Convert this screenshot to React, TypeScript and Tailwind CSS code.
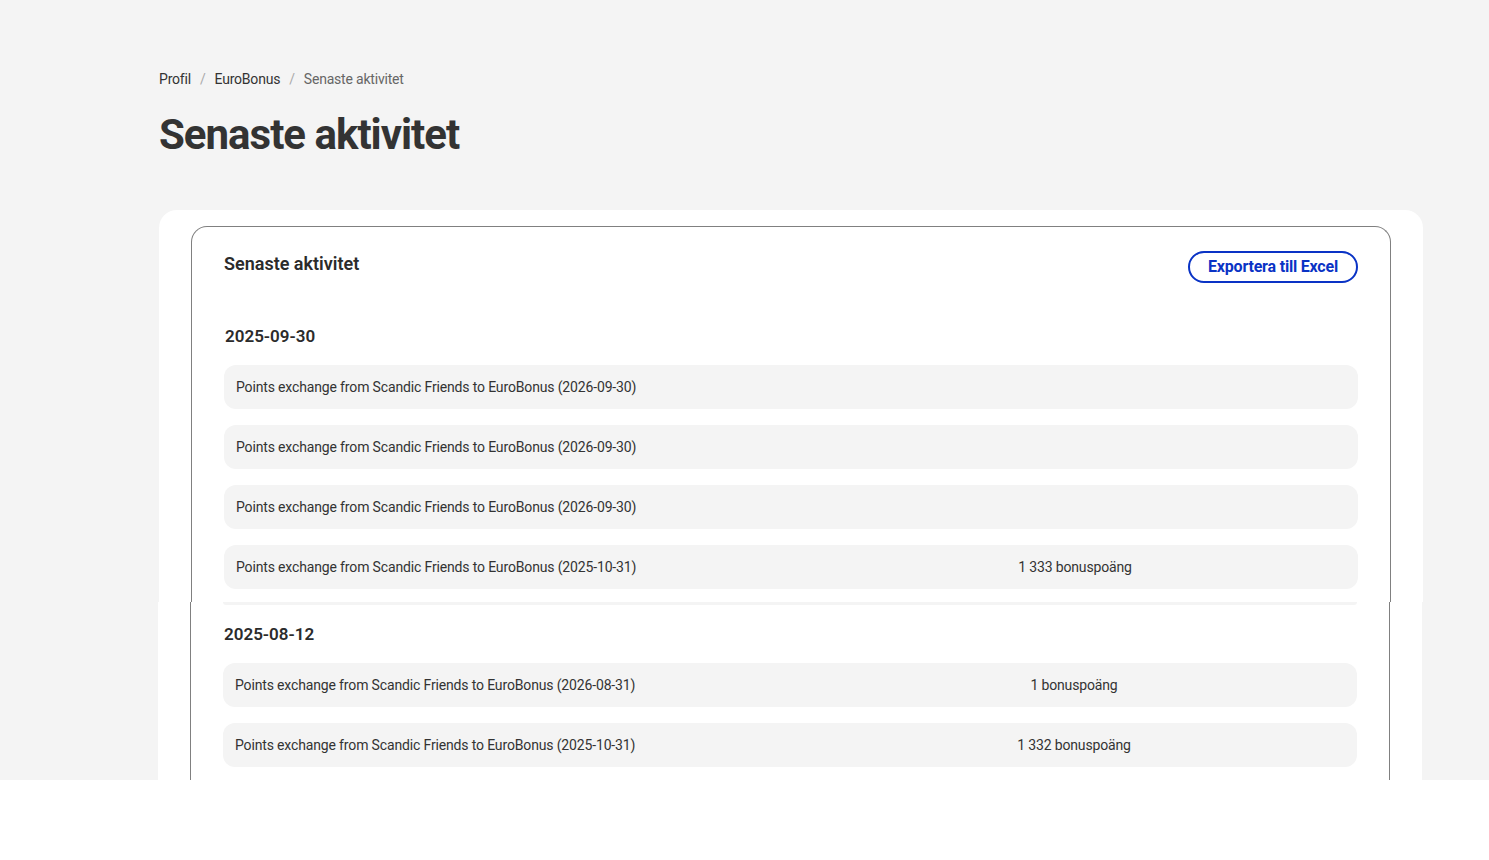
import React from "react";

type Activity = { text: string; points?: string };

const group1: Activity[] = [
  { text: "Points exchange from Scandic Friends to EuroBonus (2026-09-30)" },
  { text: "Points exchange from Scandic Friends to EuroBonus (2026-09-30)" },
  { text: "Points exchange from Scandic Friends to EuroBonus (2026-09-30)" },
  { text: "Points exchange from Scandic Friends to EuroBonus (2025-10-31)", points: "1 333 bonuspoäng" },
];

const group2: Activity[] = [
  { text: "Points exchange from Scandic Friends to EuroBonus (2026-08-31)", points: "1 bonuspoäng" },
  { text: "Points exchange from Scandic Friends to EuroBonus (2025-10-31)", points: "1 332 bonuspoäng" },
];

const font = { fontFamily: "Roboto, 'Liberation Sans', Arial, sans-serif" };

function Row({ item }: { item: Activity }) {
  return (
    <div className="grid h-[44px] shrink-0 grid-cols-[1fr_226px_158px] items-center rounded-xl bg-[#f4f4f4] px-3 text-[14px] tracking-[-0.15px] text-[#333]">
      <span className="truncate">{item.text}</span>
      <span className="text-center">{item.points ?? ""}</span>
      <span />
    </div>
  );
}

function DateHeading({ children, className = "" }: { children: React.ReactNode; className?: string }) {
  return (
    <h3 className={`pl-px text-[17px] font-semibold leading-[24px] tracking-[0px] text-[#2b2b2b] ${className}`}>
      {children}
    </h3>
  );
}

export default function App() {
  return (
    <div className="h-[860px] w-full bg-white" style={font}>
      <div className="bg-[#f4f4f4]">
        {/* upper part: heading and the start of the activity list */}
        <div className="h-[602px] overflow-hidden pl-[159px] pt-[69px]">
          <nav className="flex items-center text-[14px] leading-5 tracking-[-0.2px]">
            <span className="text-[#333]">Profil</span>
            <span className="mx-[9px] text-[#aaa]">/</span>
            <span className="text-[#333]">EuroBonus</span>
            <span className="mx-[9px] text-[#aaa]">/</span>
            <span className="text-[#666]">Senaste aktivitet</span>
          </nav>
          <h1 className="mt-[20px] text-[42px] font-bold leading-[52px] tracking-[-1px] text-[#333]">
            Senaste aktivitet
          </h1>

          <div className="mt-[49px] w-[1264px] rounded-[18px] bg-white px-8 pt-4 pb-10">
            <div className="rounded-t-2xl border border-b-0 border-[#808080] px-8 pt-6 pb-10">
              <div className="flex items-start justify-between">
                <h2 className="text-[18px] font-semibold leading-[26px] tracking-[0px] text-[#2b2b2b]">
                  Senaste aktivitet
                </h2>
                <button className="flex h-[32px] w-[170px] items-center justify-center rounded-full border-2 border-[#0a33c5] text-[16px] font-bold tracking-[-0.2px] text-[#0a33c5]">
                  Exportera till Excel
                </button>
              </div>

              <DateHeading className="mt-[41px]">2025-09-30</DateHeading>
              <div className="mt-[17px] flex flex-col gap-4">
                {group1.map((item, i) => (
                  <Row key={i} item={item} />
                ))}
              </div>
            </div>
          </div>
        </div>

        {/* lower part of the list */}
        <div className="h-[178px] overflow-hidden pl-[158px]">
          <div className="flex h-full w-[1264px] flex-col bg-white px-8">
            <div className="flex h-full flex-col border-x border-[#808080] px-8">
              {/* bottom edge of the previous entry */}
              <div className="h-[3px] shrink-0 rounded-b-[6px] bg-[#f4f4f4]" />
              <DateHeading className="mt-[17px]">2025-08-12</DateHeading>
              <div className="mt-[17px] flex flex-col gap-4">
                {group2.map((item, i) => (
                  <Row key={i} item={item} />
                ))}
              </div>
            </div>
          </div>
        </div>
      </div>
    </div>
  );
}
